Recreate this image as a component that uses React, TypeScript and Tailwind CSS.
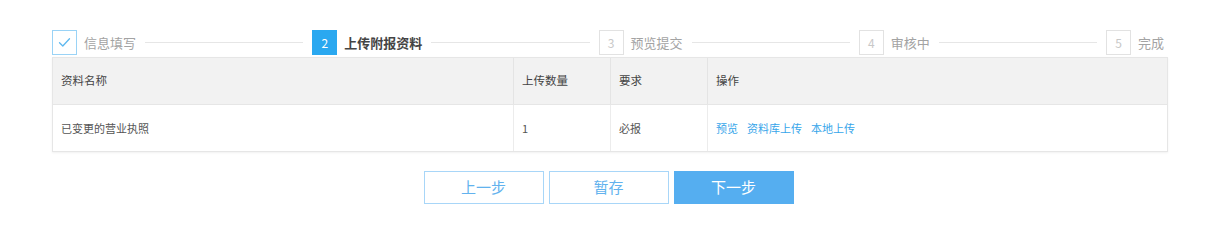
import React from "react";

const font = {
  fontFamily: '"Noto Sans CJK SC", "Liberation Sans", sans-serif',
};

type Step = { label: string; state: "done" | "active" | "todo" };

const steps: Step[] = [
  { label: "信息填写", state: "done" },
  { label: "上传附报资料", state: "active" },
  { label: "预览提交", state: "todo" },
  { label: "审核中", state: "todo" },
  { label: "完成", state: "todo" },
];

function StepBox({ index, state }: { index: number; state: Step["state"] }) {
  if (state === "done") {
    return (
      <div className="flex h-[25px] w-[25px] shrink-0 items-center justify-center border border-[#9ad3f6] bg-white">
        <svg width="13" height="11" viewBox="0 0 13 11" fill="none">
          <path
            d="M1.5 5.8 L4.8 9 L11.5 1.8"
            stroke="#5db8ef"
            strokeWidth="1.3"
            strokeLinecap="round"
            strokeLinejoin="round"
          />
        </svg>
      </div>
    );
  }

  if (state === "active") {
    return (
      <div className="flex h-[25px] w-[25px] shrink-0 items-center justify-center bg-[#2aa8f0] text-[12px] text-white">
        {index}
      </div>
    );
  }

  return (
    <div className="flex h-[25px] w-[25px] shrink-0 items-center justify-center border border-[#e2e2e2] bg-white text-[12px] text-[#c8c8c8]">
      {index}
    </div>
  );
}

function Steps() {
  return (
    <div className="flex h-[25px] items-center">
      {steps.map((step, i) => (
        <React.Fragment key={step.label}>
          <StepBox index={i + 1} state={step.state} />
          <span
            className={
              step.state === "active"
                ? "ml-[7px] whitespace-nowrap text-[13px] font-semibold text-[#444]"
                : "ml-[7px] whitespace-nowrap text-[13px] text-[#a3a3a3]"
            }
          >
            {step.label}
          </span>
          {i < steps.length - 1 && (
            <div className="mx-[9px] h-px flex-1 bg-[#e6e6e6]" />
          )}
        </React.Fragment>
      ))}
      <div className="w-[4px]" />
    </div>
  );
}

function MaterialTable() {
  return (
    <div className="mt-[2px] border border-[#e6e6e6] shadow-[0_1px_2px_rgba(0,0,0,0.06)]">
      <div className="grid h-[46px] grid-cols-[460px_97px_97px_1fr] bg-[#f2f2f2] text-[11.5px] text-[#444]">
        <div className="flex items-center pl-2">资料名称</div>
        <div className="flex items-center border-l border-[#e4e4e4] pl-2">
          上传数量
        </div>
        <div className="flex items-center border-l border-[#e4e4e4] pl-2">
          要求
        </div>
        <div className="flex items-center border-l border-[#e4e4e4] pl-2">
          操作
        </div>
      </div>
      <div className="grid h-[47px] grid-cols-[460px_97px_97px_1fr] border-t border-[#e6e6e6] bg-white text-[11px] text-[#555]">
        <div className="flex items-center pl-2">已变更的营业执照</div>
        <div className="flex items-center border-l border-[#ececec] pl-2">
          1
        </div>
        <div className="flex items-center border-l border-[#ececec] pl-2">
          必报
        </div>
        <div className="flex items-center gap-[9px] border-l border-[#ececec] pl-2 text-[#37a6ea]">
          <span>预览</span>
          <span>资料库上传</span>
          <span>本地上传</span>
        </div>
      </div>
    </div>
  );
}

export default function App() {
  return (
    <div className="h-[246px] w-[1205px] bg-white" style={font}>
      <div className="ml-[52px] w-[1116px] pt-[30px]">
        <Steps />
        <MaterialTable />
        <div className="mt-[19px] flex justify-center gap-[5px] pr-[3px]">
          <button className="h-[33px] w-[120px] border border-[#a8d6f8] bg-white text-[15px] text-[#62b2ee]">
            上一步
          </button>
          <button className="h-[33px] w-[120px] border border-[#a8d6f8] bg-white text-[15px] text-[#62b2ee]">
            暂存
          </button>
          <button className="h-[33px] w-[120px] bg-[#55aef0] text-[15px] text-white">
            下一步
          </button>
        </div>
      </div>
    </div>
  );
}
